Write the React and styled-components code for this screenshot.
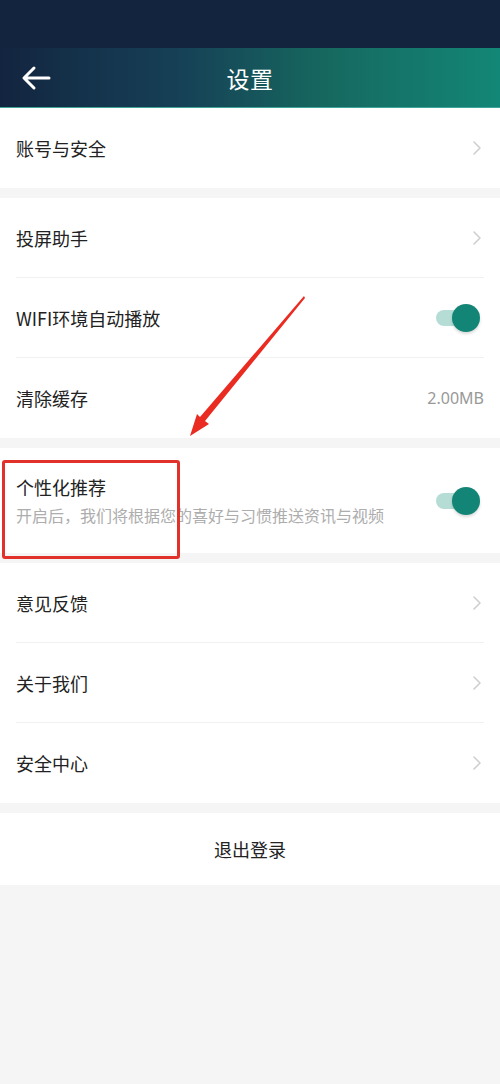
import React from 'react'
import styled, { createGlobalStyle } from 'styled-components'

const Global = createGlobalStyle`
  * { box-sizing: border-box; }
  body {
    margin: 0;
    background: #f5f5f5;
    font-family: "Noto Sans CJK SC", "Noto Sans", sans-serif;
  }
`

const Page = styled.div`
  position: relative;
  width: 500px;
  min-height: 1084px;
  background: #f5f5f5;
`

const StatusBar = styled.div`
  height: 48px;
  background: #13243f;
`

const Header = styled.div`
  height: 60px;
  display: flex;
  align-items: center;
  justify-content: center;
  position: relative;
  background: linear-gradient(90deg, #13243f 0%, #14314a 15%, #163f56 35%, #16685f 65%, #138777 100%);
  border-bottom: 1px solid #3fa598;
`

const Back = styled.div`
  position: absolute;
  left: 20px;
  top: 17px;
  width: 32px;
  height: 26px;
`

const Title = styled.div`
  color: #fff;
  font-size: 23px;
  letter-spacing: 0.5px;
`

const Section = styled.div`
  position: relative;
  background: #fff;
  margin-bottom: 10px;
`

const Row = styled.div`
  height: ${p => p.h || 80}px;
  margin: 0 16px;
  display: flex;
  align-items: center;
  justify-content: space-between;
  border-bottom: ${p => (p.last ? 'none' : '1px solid #f1f1f1')};
`

const Label = styled.div`
  font-size: 18px;
  color: #222;
`

const Sub = styled.div`
  font-size: 16px;
  color: #adadad;
  margin-top: 3px;
`

const Value = styled.div`
  font-size: 16px;
  color: #999;
  font-family: "Noto Sans", sans-serif;
`

const Toggle = styled.div`
  position: relative;
  width: 44px;
  height: 28px;
  margin-right: 4px;
  &::before {
    content: '';
    position: absolute;
    left: 0;
    top: 6px;
    width: 38px;
    height: 16px;
    border-radius: 8px;
    background: #b5ddd5;
  }
  &::after {
    content: '';
    position: absolute;
    right: 0;
    top: 0;
    width: 28px;
    height: 28px;
    border-radius: 50%;
    background: #138576;
    box-shadow: 0 2px 3px rgba(0, 0, 0, 0.15);
  }
`

const Logout = styled.div`
  height: 72px;
  display: flex;
  align-items: center;
  justify-content: center;
  font-size: 18px;
  color: #222;
  background: #fff;
`

const Highlight = styled.div`
  position: absolute;
  left: 2px;
  top: 12px;
  width: 178px;
  height: 99px;
  border: 3px solid #e2302a;
  border-radius: 3px;
`

const Overlay = styled.svg`
  position: absolute;
  left: 0;
  top: 0;
  pointer-events: none;
`

const Chevron = () => (
  <svg width="10" height="16" viewBox="0 0 10 16" style={{ marginRight: 2 }}>
    <path d="M2 2 L8 8 L2 14" fill="none" stroke="#cfcfcf" strokeWidth="1.6" strokeLinecap="round" strokeLinejoin="round" />
  </svg>
)

export default function App() {
  return (
    <Page>
      <Global />
      <StatusBar />
      <Header>
        <Back>
          <svg width="32" height="26" viewBox="0 0 32 26">
            <path d="M4 13 H29 M14 3 L4 13 L14 23" fill="none" stroke="#fff" strokeWidth="3" strokeLinecap="round" strokeLinejoin="round" />
          </svg>
        </Back>
        <Title>设置</Title>
      </Header>

      <Section>
        <Row last><Label>账号与安全</Label><Chevron /></Row>
      </Section>

      <Section>
        <Row><Label>投屏助手</Label><Chevron /></Row>
        <Row><Label>WIFI环境自动播放</Label><Toggle /></Row>
        <Row last><Label>清除缓存</Label><Value>2.00MB</Value></Row>
      </Section>

      <Section>
        <Row h={105} last>
          <div>
            <Label>个性化推荐</Label>
            <Sub>开启后，我们将根据您的喜好与习惯推送资讯与视频</Sub>
          </div>
          <Toggle />
        </Row>
        <Highlight />
      </Section>

      <Section>
        <Row><Label>意见反馈</Label><Chevron /></Row>
        <Row><Label>关于我们</Label><Chevron /></Row>
        <Row last><Label>安全中心</Label><Chevron /></Row>
      </Section>

      <Logout>退出登录</Logout>

      <Overlay width="500" height="1084" viewBox="0 0 500 1084">
        <polygon
          points="304,296 305,298 205,421 209,424 190,436 197,414 200,417"
          fill="#ea2b22"
        />
      </Overlay>
    </Page>
  )
}
